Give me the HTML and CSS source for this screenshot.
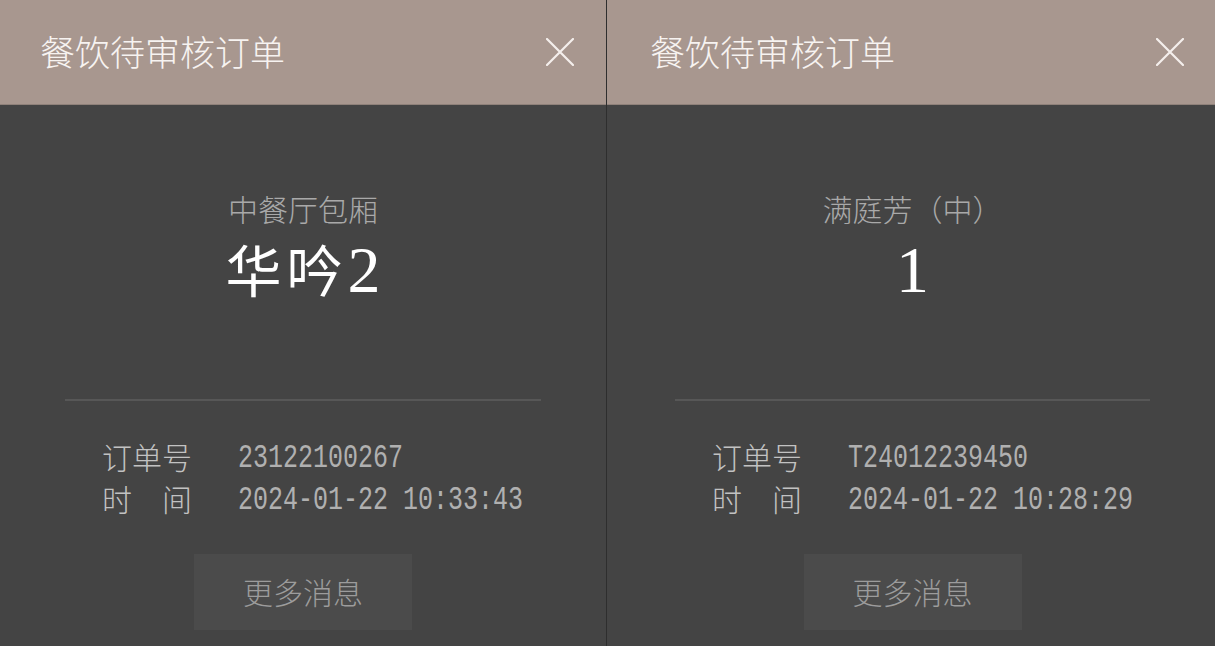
FILE: index.html
```html
<!DOCTYPE html>
<html>
<head>
    <title>餐饮待审核订单</title>
    <link rel="stylesheet" href="styles.css">
</head>
<body>
    <div class="board">
        <!-- Left notice -->
        <div class="panel">
            <div class="panel-head">
                <span class="panel-title">餐饮待审核订单</span>
                <svg class="close" viewBox="0 0 28 28" width="28" height="28">
                    <path d="M1 1 L27 27 M27 1 L1 27" stroke="#f4efec" stroke-width="2.2" stroke-linecap="round"/>
                </svg>
            </div>
            <div class="panel-body">
                <p class="room-type">中餐厅包厢</p>
                <p class="room-name">华吟<span class="num">2</span></p>
                <hr class="split">
                <div class="info">
                    <span class="label">订单号</span><span class="value">23122100267</span>
                    <span class="label">时　间</span><span class="value">2024-01-22 10:33:43</span>
                </div>
                <button class="more">更多消息</button>
            </div>
        </div>

        <!-- Right notice -->
        <div class="panel panel-right">
            <div class="panel-head">
                <span class="panel-title">餐饮待审核订单</span>
                <svg class="close" viewBox="0 0 28 28" width="28" height="28">
                    <path d="M1 1 L27 27 M27 1 L1 27" stroke="#f4efec" stroke-width="2.2" stroke-linecap="round"/>
                </svg>
            </div>
            <div class="panel-body">
                <p class="room-type">满庭芳（中）</p>
                <p class="room-name"><span class="num">1</span></p>
                <hr class="split">
                <div class="info">
                    <span class="label">订单号</span><span class="value">T24012239450</span>
                    <span class="label">时　间</span><span class="value">2024-01-22 10:28:29</span>
                </div>
                <button class="more">更多消息</button>
            </div>
        </div>
    </div>
</body>
</html>
```

FILE: styles.css
```css
/* General Styles */
body {
    margin: 0;
    padding: 0;
    background-color: #444444;
    font-family: "Noto Sans CJK SC", sans-serif;
}

.board {
    display: grid;
    grid-template-columns: 606px 1fr;
    column-gap: 1px;
    background-color: #2e2e2e; /* seam between the two notices */
    height: 646px;
    overflow: hidden;
}

.panel {
    display: flex;
    flex-direction: column;
    background-color: #444444;
}

/* Header */
.panel-head {
    height: 105px;
    box-sizing: border-box;
    display: flex;
    align-items: center;
    justify-content: space-between;
    padding: 0 32px 0 40px;
    background-color: #a8978f;
    border-bottom: 1px solid #8f817a;
}

.panel-title {
    color: #f7f3f1;
    font-size: 35px;
    font-weight: 300;
    line-height: 40px;
    margin-top: -2px;
}

.close {
    display: block;
    margin-top: -1px;
}

/* Body */
.panel-body {
    flex: 1;
    display: flex;
    flex-direction: column;
    align-items: center;
    padding-top: 83px;
}

/* second notice sits a few pixels further right */
.panel-right .panel-head {
    padding: 0 31px 0 43px;
}

.panel-right .panel-body {
    padding-left: 3px;
}

.room-type {
    margin: 0;
    color: #a9a9a9;
    font-size: 30px;
    font-weight: 300;
    line-height: 40px;
}

.room-name {
    margin: 10px 0 0;
    color: #ffffff;
    font-size: 56px;
    line-height: 60px;
    letter-spacing: 5px;
}

.room-name .num {
    font-family: "Liberation Serif", serif;
    font-size: 66px;
    letter-spacing: 0;
}

.split {
    align-self: stretch;
    margin: 99px 65px 0 65px;
    border: none;
    border-top: 2px solid #575757;
}

.info {
    align-self: stretch;
    display: grid;
    grid-template-columns: 136px 1fr;
    grid-auto-rows: 42px;
    align-items: center;
    padding-left: 102px;
    margin-top: 36px;
    line-height: 42px;
}

.label {
    color: #c2c2c2;
    font-size: 30px;
    font-weight: 300;
    margin-top: -4px;
}

.value {
    color: #b0b0b0;
    font-family: "Liberation Mono", monospace;
    font-size: 25px;
    justify-self: start;
    transform: scaleY(1.35); /* tall narrow digits */
    margin-top: 2px;
}

.more {
    margin-top: 33px;
    width: 218px;
    height: 76px;
    border: none;
    background-color: #4b4b4b;
    color: #9c9c9c;
    font-family: "Noto Sans CJK SC", sans-serif;
    font-size: 30px;
    font-weight: 300;
    padding-bottom: 4px;
    cursor: pointer;
}
```
